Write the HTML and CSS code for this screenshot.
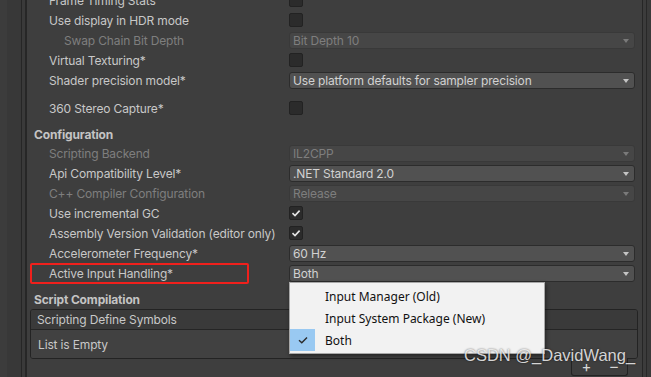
FILE: index.html
```html
<!DOCTYPE html>
<html>
<head>
  <title>Player Settings</title>
  <link rel="stylesheet" href="styles.css">
</head>
<body>

  <div class="editor">
    <div class="gutter"></div>

    <div class="inspector">
      <div class="rows">
        <div class="row">
          <span class="label">Frame Timing Stats</span>
          <span class="check"></span>
        </div>
        <div class="row">
          <span class="label">Use display in HDR mode</span>
          <span class="check"></span>
        </div>
        <div class="row">
          <span class="label sub disabled">Swap Chain Bit Depth</span>
          <div class="select disabled"><span>Bit Depth 10</span><i class="arrow"></i></div>
        </div>
        <div class="row">
          <span class="label">Virtual Texturing*</span>
          <span class="check"></span>
        </div>
        <div class="row">
          <span class="label">Shader precision model*</span>
          <div class="select"><span>Use platform defaults for sampler precision</span><i class="arrow"></i></div>
        </div>
        <div class="row spaced">
          <span class="label">360 Stereo Capture*</span>
          <span class="check"></span>
        </div>

        <div class="section">Configuration</div>
        <div class="row">
          <span class="label disabled">Scripting Backend</span>
          <div class="select disabled"><span>IL2CPP</span><i class="arrow"></i></div>
        </div>
        <div class="row">
          <span class="label">Api Compatibility Level*</span>
          <div class="select"><span>.NET Standard 2.0</span><i class="arrow"></i></div>
        </div>
        <div class="row">
          <span class="label disabled">C++ Compiler Configuration</span>
          <div class="select disabled"><span>Release</span><i class="arrow"></i></div>
        </div>
        <div class="row">
          <span class="label">Use incremental GC</span>
          <span class="check on">
            <svg width="14" height="14" viewBox="0 0 14 14"><path d="M3.5 7.2 L6 9.6 L10.6 4.6" fill="none" stroke="#e4e4e4" stroke-width="1.6"/></svg>
          </span>
        </div>
        <div class="row">
          <span class="label">Assembly Version Validation (editor only)</span>
          <span class="check on">
            <svg width="14" height="14" viewBox="0 0 14 14"><path d="M3.5 7.2 L6 9.6 L10.6 4.6" fill="none" stroke="#e4e4e4" stroke-width="1.6"/></svg>
          </span>
        </div>
        <div class="row">
          <span class="label">Accelerometer Frequency*</span>
          <div class="select"><span>60 Hz</span><i class="arrow"></i></div>
        </div>
        <div class="row marked">
          <span class="label">Active Input Handling*</span>
          <div class="select"><span>Both</span><i class="arrow"></i></div>
        </div>

        <div class="section lower">Script Compilation</div>
        <div class="list">
          <div class="list-head">Scripting Define Symbols</div>
          <div class="list-body">List is Empty</div>
        </div>
        <div class="list-foot">
          <div class="foot-box"><span>+</span><span>&ndash;</span></div>
        </div>
      </div>
    </div>

    <div class="scrollbar"></div>
  </div>

  <div class="menu">
    <div class="menu-item"><span class="tick"></span>Input Manager (Old)</div>
    <div class="menu-item"><span class="tick"></span>Input System Package (New)</div>
    <div class="menu-item"><span class="tick on">
      <svg width="14" height="14" viewBox="0 0 14 14"><path d="M3 7.2 L5.8 9.8 L11 4.4" fill="none" stroke="#2b2b2b" stroke-width="1.4"/></svg>
    </span>Both</div>
  </div>

  <div class="watermark">CSDN @_DavidWang_</div>

</body>
</html>
```

FILE: styles.css
```css
body {
  margin: 0;
  width: 651px;
  height: 377px;
  overflow: hidden;
  background: #3e3e3e;
  font-family: Inter, 'Noto Sans', sans-serif;
  font-size: 12px;
  letter-spacing: -0.15px;
  color: #c8c8c8;
}

.editor {
  display: flex;
  height: 377px;
}

.gutter {
  width: 27px;
  flex-shrink: 0;
  background: linear-gradient(to right,
    #3c3c3c 0, #3c3c3c 7px,
    #383838 7px, #383838 21px,
    #262626 21px, #262626 22px,
    #3a3a3a 22px, #3a3a3a 25px,
    #272727 25px, #272727 27px);
}

.scrollbar {
  width: 10px;
  flex-shrink: 0;
  background: linear-gradient(to right,
    #3e3e3e 0, #3e3e3e 1px,
    #262626 1px, #262626 2px,
    #3c3c3c 2px, #3c3c3c 5px,
    #282828 5px, #282828 6px,
    #3a3a3a 6px, #3a3a3a 10px);
}

.inspector {
  flex: 1;
  overflow: hidden;
}

.rows {
  margin-top: -10px;
}

.row {
  display: flex;
  align-items: center;
  height: 20px;
}

.row.spaced {
  margin-top: 8px;
}

.label {
  width: 240px;
  padding-left: 22px;
  flex-shrink: 0;
  white-space: nowrap;
}

.label.sub {
  width: 225px;
  padding-left: 37px;
}

.disabled {
  color: #7e7e7e;
}

.check {
  width: 12px;
  height: 12px;
  border: 1px solid #222;
  border-radius: 2px;
  background: #2b2b2b;
  display: flex;
}

.check svg {
  margin: -1px;
}

.select {
  flex: 1;
  height: 15px;
  margin-right: 6px;
  padding: 0 5px 0 3px;
  display: flex;
  align-items: center;
  justify-content: space-between;
  background: #515151;
  border: 1px solid #2c2c2c;
  border-radius: 3px;
  color: #d2d2d2;
}

.select.disabled {
  background: #464646;
  border-color: #393939;
  color: #7e7e7e;
}

.arrow {
  width: 0;
  height: 0;
  margin-top: 1px;
  border-left: 3.5px solid transparent;
  border-right: 3.5px solid transparent;
  border-top: 4px solid #c4c4c4;
}

.select.disabled .arrow {
  border-top-color: #7a7a7a;
}

.section {
  height: 18px;
  margin-top: 7px;
  padding-left: 7px;
  display: flex;
  align-items: center;
  font-weight: 700;
  color: #c4c4c4;
}

/* red annotation frame round the row */
.row.marked {
  position: relative;
}

.row.marked::before {
  content: "";
  position: absolute;
  left: 3px;
  top: 0;
  width: 215px;
  height: 17px;
  border: 2px solid #f0201c;
  border-radius: 2px;
}

.list {
  margin: 1px 3px 0 3px;
  border: 1px solid #232323;
  border-radius: 3px;
  overflow: hidden;
}

.list-head {
  height: 19px;
  padding-left: 6px;
  display: flex;
  align-items: center;
  background: #3a3a3a;
  border-bottom: 1px solid #252525;
}

.list-body {
  height: 28px;
  padding-left: 7px;
  display: flex;
  align-items: center;
  background: #414141;
}

.list-foot {
  display: flex;
  justify-content: flex-end;
  padding-right: 13px;
}

.foot-box {
  width: 55px;
  height: 17px;
  margin-top: -1px;
  display: flex;
  justify-content: space-around;
  align-items: center;
  background: #3e3e3e;
  border: 1px solid #232323;
  border-top: none;
  border-radius: 0 0 3px 3px;
  font-size: 15px;
  color: #d6d6d6;
}

.menu {
  position: absolute;
  left: 289px;
  top: 282px;
  width: 254px;
  padding: 2px 0 2px 0;
  background: #f2f2f2;
  border: 1px solid #a8a8a8;
  box-shadow: 1px 2px 4px rgba(0, 0, 0, 0.45);
  font-family: 'Noto Sans', sans-serif;
  font-size: 12px;
  letter-spacing: 0;
  color: #111;
}

.menu-item {
  height: 22px;
  display: flex;
  align-items: center;
}

.tick {
  width: 25px;
  height: 22px;
  margin-right: 10px;
  display: flex;
  align-items: center;
  justify-content: center;
}

.tick.on {
  background: #99c9f2;
}

.watermark {
  position: absolute;
  left: 464px;
  top: 346px;
  font-family: 'Liberation Sans', sans-serif;
  font-size: 16.5px;
  letter-spacing: 0;
  color: rgba(245, 245, 245, 0.85);
  text-shadow: 0 0 2px rgba(0, 0, 0, 0.6);
}
```
